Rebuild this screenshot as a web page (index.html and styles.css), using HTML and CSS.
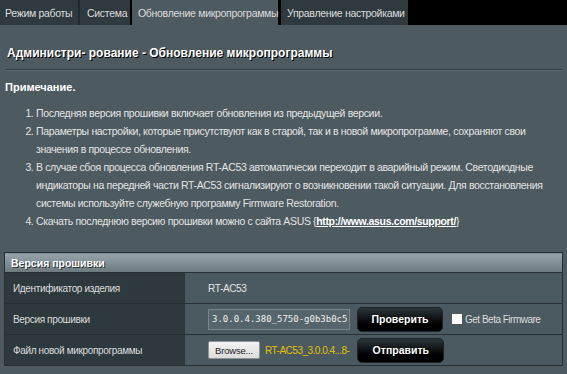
FILE: index.html
```
<!DOCTYPE html>
<html lang="ru">
<head>
    <meta charset="UTF-8">
    <meta name="viewport" content="width=device-width, initial-scale=1.0">
    <title>Обновление микропрограммы</title>
    <link rel="stylesheet" href="styles.css">
</head>
<body>
    <div class="tabs">
        <div class="tab tab-mode">Режим работы</div>
        <div class="tab tab-system">Система</div>
        <div class="tab tab-active">Обновление микропрограммы</div>
        <div class="tab tab-settings">Управление настройками</div>
    </div>

    <div class="main">
        <h1 class="page-title">Администри- рование - Обновление микропрограммы</h1>
        <div class="divider"></div>

        <p class="note-title">Примечание.</p>
        <ol class="notes">
            <li>Последняя версия прошивки включает обновления из предыдущей версии.</li>
            <li>Параметры настройки, которые присутствуют как в старой, так и в новой микропрограмме, сохраняют свои значения в процессе обновления.</li>
            <li>В случае сбоя процесса обновления RT-AC53 автоматически переходит в аварийный режим. Светодиодные индикаторы на передней части RT-AC53 сигнализируют о возникновении такой ситуации. Для восстановления системы используйте служебную программу Firmware Restoration.</li>
            <li>Скачать последнюю версию прошивки можно с сайта ASUS {<a href="#" class="asus-link">http://www.asus.com/support/</a>}</li>
        </ol>

        <table class="fw-table">
            <thead>
                <tr>
                    <td colspan="2" class="fw-head">Версия прошивки</td>
                </tr>
            </thead>
            <tbody>
                <tr>
                    <th>Идентификатор изделия</th>
                    <td>RT-AC53</td>
                </tr>
                <tr>
                    <th>Версия прошивки</th>
                    <td>
                        <div class="cell-row">
                            <input type="text" class="fw-version" value="3.0.0.4.380_5750-g0b3b0c5" readonly>
                            <button class="btn-dark btn-check">Проверить</button>
                            <label class="beta"><span class="beta-box"></span>Get Beta Firmware</label>
                        </div>
                    </td>
                </tr>
                <tr>
                    <th>Файл новой микропрограммы</th>
                    <td>
                        <div class="cell-row">
                            <button class="browse">Browse...</button>
                            <span class="file-name">RT-AC53_3.0.0.4...8-</span>
                            <button class="btn-dark btn-upload">Отправить</button>
                        </div>
                    </td>
                </tr>
            </tbody>
        </table>
    </div>
</body>
</html>
```

FILE: styles.css
```
body {
    margin: 0;
    background: #4d5a5f;
    font-family: "Liberation Sans", Arial, sans-serif;
    font-size: 11px;
    color: #e4e4e4;
    overflow: hidden;
}

.tabs {
    display: flex;
    height: 25px;
    background: #000;
}

.tab {
    display: flex;
    align-items: center;
    box-sizing: border-box;
    padding: 0 0 0 5px;
    background: #2f3a3e;
    color: #dcdcdc;
    font-size: 10.5px;
    letter-spacing: -0.3px;
    white-space: nowrap;
}

.tab-mode {
    width: 80px;
    border-right: 2px solid #1f2b2f;
}

.tab-system {
    width: 50px;
    padding-left: 7px;
    margin-right: 2px;
}

.tab-active {
    width: 146px;
    padding-left: 6px;
    background: #4d5a5f;
    margin-right: 3px;
}

.tab-settings {
    width: 127px;
    padding-left: 6px;
}

.main {
    padding: 0 4px 0 4px;
}

.page-title {
    margin: 20px 0 0 3px;
    font-size: 12px;
    line-height: 16px;
    color: #fff;
    text-shadow: 1px 1px 0 #000;
}

.divider {
    margin: 8px 1px 0 2px;
    height: 1px;
    background: #313c40;
    border-bottom: 1px solid #5a676c;
}

.note-title {
    margin: 8px 0 0 1px;
    font-weight: bold;
    line-height: 16px;
    color: #fff;
}

.notes {
    margin: 9px 0 0 0;
    padding: 0 20px 0 32px;
    font-size: 10.5px;
    line-height: 18px;
    letter-spacing: -0.35px;
}

.asus-link {
    color: #fff;
    font-weight: bold;
}

.fw-table {
    width: 100%;
    margin-top: 22px;
    border-collapse: collapse;
    border: 1px solid #263034;
    font-size: 10px;
    letter-spacing: -0.35px;
}

.fw-table .fw-head {
    height: 19px;
    padding: 0 6px;
    background: linear-gradient(#97a4aa, #6c7a80);
    color: #fff;
    font-size: 10.5px;
    font-weight: bold;
    letter-spacing: 0;
    text-shadow: 1px 1px 0 #333;
    border-bottom: 1px solid #263034;
}

.fw-table th {
    width: 172px;
    height: 30px;
    padding: 0 0 0 8px;
    background: #2e393d;
    font-weight: normal;
    text-align: left;
    color: #dcdcdc;
    border-top: 1px solid #263034;
}

.fw-table td {
    padding: 0 0 0 23px;
    background: #4a5a60;
    border-top: 1px solid #263034;
}

.cell-row {
    display: flex;
    align-items: center;
}

.fw-version {
    box-sizing: border-box;
    width: 142px;
    height: 21px;
    margin: 0;
    padding: 0 0 0 3px;
    border: 1px solid #76868b;
    background: #56656b;
    color: #f0f0f0;
    font-family: "DejaVu Sans Mono", "Liberation Mono", monospace;
    font-size: 9px;
    letter-spacing: 0;
}

.btn-dark {
    height: 25px;
    padding: 0;
    border: 1px solid #1b2326;
    border-radius: 5px;
    background: linear-gradient(#2b373b, #000 70%);
    color: #fff;
    font-family: "Liberation Sans", Arial, sans-serif;
    font-size: 10.5px;
    font-weight: bold;
    text-shadow: 1px 1px 0 #000;
}

.btn-check {
    width: 86px;
    margin-left: 7px;
}

.btn-upload {
    width: 87px;
    margin-left: 8px;
}

.beta {
    display: flex;
    align-items: center;
    margin-left: 8px;
    color: #dcdcdc;
    letter-spacing: -0.5px;
}

.beta-box {
    width: 10px;
    height: 10px;
    margin-right: 2px;
    background: #fff;
    border: 1px solid #555;
}

.browse {
    box-sizing: border-box;
    width: 52px;
    height: 18px;
    padding: 0;
    border: 1px solid #8c9498;
    border-radius: 2px;
    background: linear-gradient(#f2f2f2, #dcdcdc);
    color: #222;
    font-family: "Liberation Sans", Arial, sans-serif;
    font-size: 9.5px;
    letter-spacing: -0.2px;
}

.file-name {
    margin-left: 5px;
    color: #e6c000;
    letter-spacing: -0.5px;
}
```
